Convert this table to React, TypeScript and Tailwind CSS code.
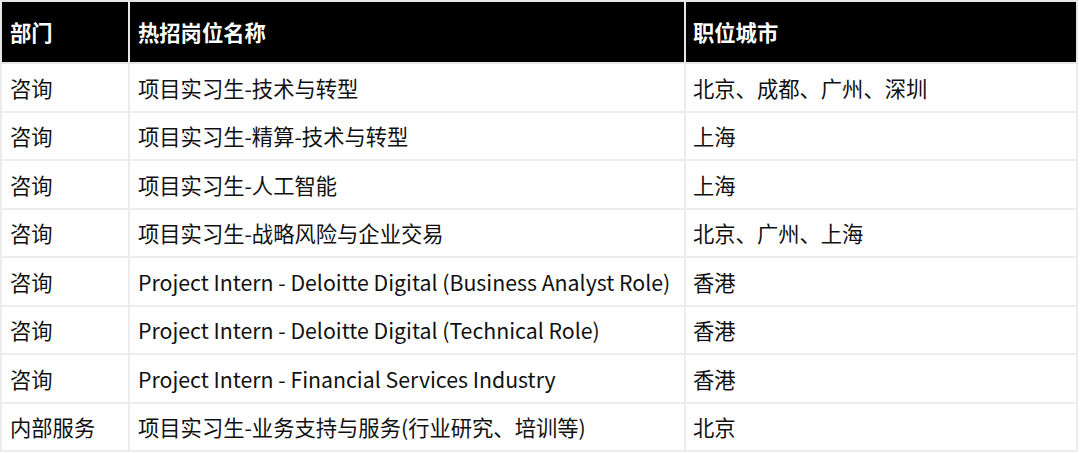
const rows: [string, string, string][] = [
  ["咨询", "项目实习生-技术与转型", "北京、成都、广州、深圳"],
  ["咨询", "项目实习生-精算-技术与转型", "上海"],
  ["咨询", "项目实习生-人工智能", "上海"],
  ["咨询", "项目实习生-战略风险与企业交易", "北京、广州、上海"],
  ["咨询", "Project Intern - Deloitte Digital (Business Analyst Role)", "香港"],
  ["咨询", "Project Intern - Deloitte Digital (Technical Role)", "香港"],
  ["咨询", "Project Intern - Financial Services Industry", "香港"],
  ["内部服务", "项目实习生-业务支持与服务(行业研究、培训等)", "北京"],
];

export default function App() {
  return (
    <div
      className="w-[1080px] h-[453px] bg-white overflow-hidden"
      style={{ fontFamily: '"Noto Sans CJK SC", "Noto Sans", sans-serif' }}
    >
      <table className="w-[1078px] border-collapse table-fixed text-[21.3px] leading-none">
        <colgroup>
          <col className="w-[128px]" />
          <col className="w-[556px]" />
          <col />
        </colgroup>
        <thead>
          <tr className="h-[62px] bg-black text-white">
            <th className="border-2 border-[#e6e6e6] pl-[8px] text-left font-bold">部门</th>
            <th className="border-2 border-[#e6e6e6] pl-[8px] text-left font-bold">热招岗位名称</th>
            <th className="border-2 border-[#e6e6e6] pl-[7px] text-left font-bold">职位城市</th>
          </tr>
        </thead>
        <tbody className="text-[#111]">
          {rows.map((r, i) => (
            <tr key={i} className="h-[48.5px]">
              <td className="border-2 border-[#ececec] pl-[8px] whitespace-nowrap">{r[0]}</td>
              <td className="border-2 border-[#ececec] pl-[8px] whitespace-nowrap">{r[1]}</td>
              <td className="border-2 border-[#ececec] pl-[7px] whitespace-nowrap">{r[2]}</td>
            </tr>
          ))}
        </tbody>
      </table>
    </div>
  );
}
